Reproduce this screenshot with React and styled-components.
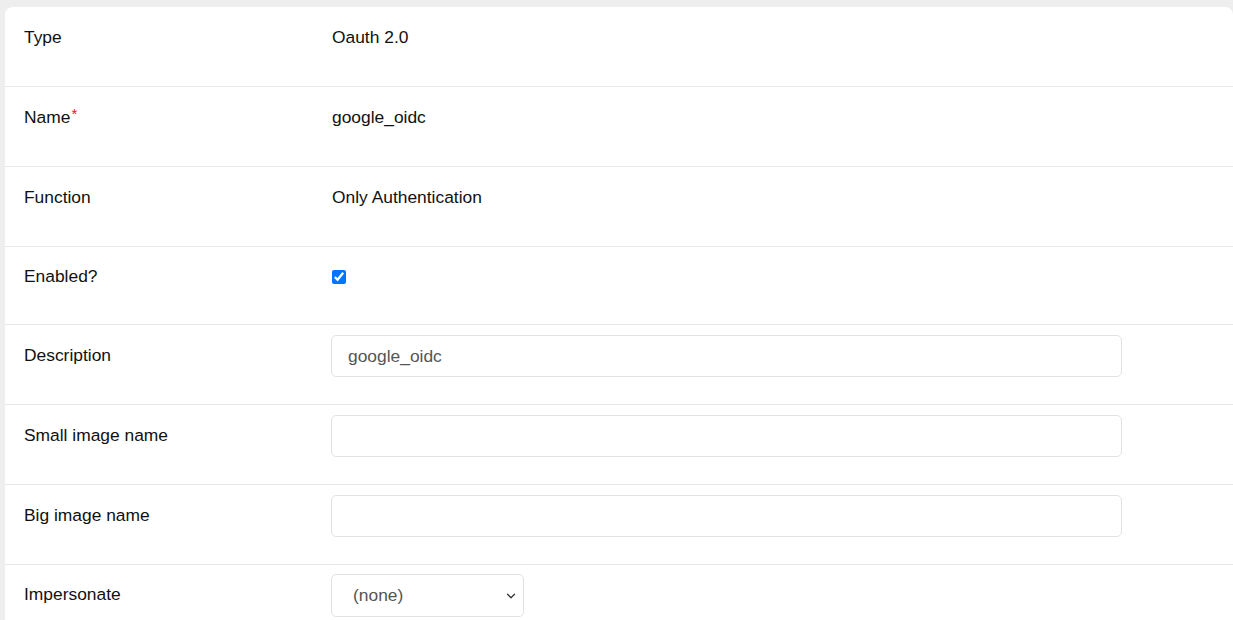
import React from 'react';
import styled, { createGlobalStyle } from 'styled-components';
import { ChevronDown } from 'lucide-react';

const GlobalStyle = createGlobalStyle`
  html, body {
    margin: 0;
    padding: 0;
    background: #eeeeee;
    overflow: hidden;
    font-family: "Liberation Sans", Arial, sans-serif;
    font-size: 17.4px;
    color: #111;
  }
`;

const Page = styled.div`
  padding: 7px 0 0 5px;
`;

const Card = styled.div`
  background: #fff;
  border-radius: 8px 8px 0 0;
  min-height: 640px;
`;

const Row = styled.div`
  display: grid;
  grid-template-columns: 307px 1fr;
  align-items: center;
  padding: 10px 0 27px 19px;
  border-bottom: 1px solid #e8e8e8;
  &:last-child {
    border-bottom: none;
    padding-top: 9px;
  }
`;

const Label = styled.div`
  box-sizing: border-box;
  min-height: ${(p) => (p.$tight ? 40 : 42)}px;
  padding-bottom: 2px;
  display: flex;
  align-items: center;
  color: #111;
`;

const Required = styled.span`
  color: #e02020;
  font-size: 15px;
  position: relative;
  top: -4px;
  margin-left: 1px;
`;

const Value = styled.div`
  box-sizing: border-box;
  min-height: ${(p) => (p.$tight ? 40 : 42)}px;
  padding-bottom: ${(p) => (p.$text ? 2 : 0)}px;
  display: flex;
  align-items: center;
  padding-left: 1px;
`;

const Checkbox = styled.input`
  width: 14px;
  height: 14px;
  margin: 0;
  accent-color: #0075ff;
`;

const TextInput = styled.input`
  box-sizing: border-box;
  width: 791px;
  height: 42px;
  margin-left: -1px;
  padding: 0 16px;
  border: 1px solid #e2e2e2;
  border-radius: 5px;
  font-family: inherit;
  font-size: 17.4px;
  color: #555;
  background: #fff;
  outline: none;
`;

const SelectWrap = styled.div`
  position: relative;
  margin-left: -1px;
  width: 193px;
  height: 43px;
`;

const Select = styled.select`
  appearance: none;
  box-sizing: border-box;
  width: 100%;
  height: 100%;
  padding: 0 30px 1px 21px;
  border: 1px solid #e2e2e2;
  border-radius: 5px;
  background: #fff;
  font-family: inherit;
  font-size: 17.4px;
  color: #555;
  outline: none;
`;

const Chevron = styled(ChevronDown)`
  position: absolute;
  right: 6px;
  top: 15px;
  pointer-events: none;
  color: #333;
`;

const rows = [
  { label: 'Type', value: 'Oauth 2.0' },
  { label: 'Name', value: 'google_oidc', required: true },
  { label: 'Function', value: 'Only Authentication' },
];

const App = () => (
  <>
    <GlobalStyle />
    <Page>
      <Card>
        {rows.map(({ label, value, required }) => (
          <Row key={label}>
            <Label>
              {label}
              {required && <Required>*</Required>}
            </Label>
            <Value $text>{value}</Value>
          </Row>
        ))}
        <Row>
          <Label $tight>Enabled?</Label>
          <Value $tight>
            <Checkbox type="checkbox" defaultChecked />
          </Value>
        </Row>
        <Row>
          <Label>Description</Label>
          <Value>
            <TextInput defaultValue="google_oidc" />
          </Value>
        </Row>
        <Row>
          <Label>Small image name</Label>
          <Value>
            <TextInput />
          </Value>
        </Row>
        <Row>
          <Label>Big image name</Label>
          <Value>
            <TextInput />
          </Value>
        </Row>
        <Row>
          <Label>Impersonate</Label>
          <Value>
            <SelectWrap>
              <Select defaultValue="">
                <option value="">(none)</option>
              </Select>
              <Chevron size={14} strokeWidth={2.2} />
            </SelectWrap>
          </Value>
        </Row>
      </Card>
    </Page>
  </>
);

export default App;
